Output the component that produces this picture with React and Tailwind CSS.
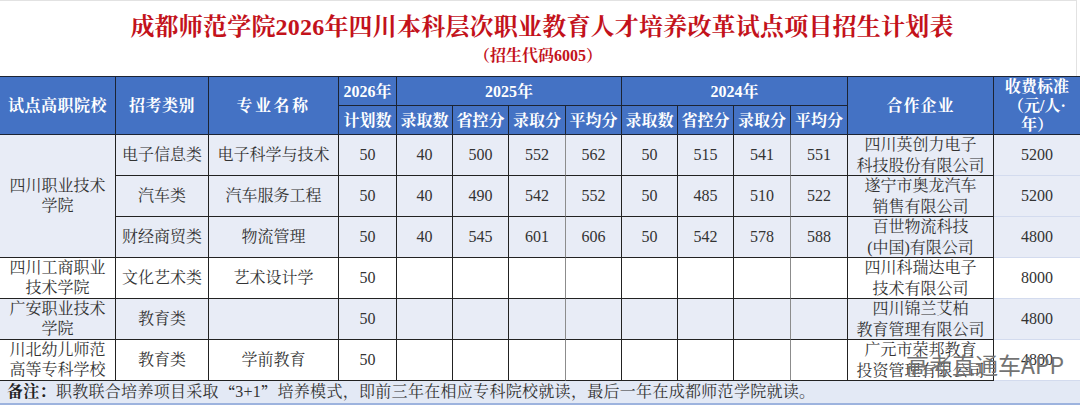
import React from "react";

const BLUE = "bg-[#e8ecf6]";

function H({ children, className = "" }) {
  return (
    <div
      className={`flex items-center justify-center text-center bg-[#4472c4] text-white font-bold text-[16px] leading-[19px] border-r border-b border-[#1c2433] ${className}`}
    >
      {children}
    </div>
  );
}

function C({ children, className = "", bg = "bg-white" }) {
  return (
    <div
      className={`flex items-center justify-center text-center text-[#333] text-[16px] leading-[20px] border-r border-b border-[#222] ${bg} ${className}`}
    >
      {children}
    </div>
  );
}

function F({ children, bg = "bg-white" }) {
  return (
    <div
      className={`flex items-center justify-center text-center text-[#333] text-[16px] leading-[20px] border-b border-[#d3dbee] ${bg}`}
    >
      {children}
    </div>
  );
}

function ScoreRow({ cat, major, vals, company, fee, bg }) {
  return (
    <>
      <C bg={bg}>{cat}</C>
      <C bg={bg}>{major}</C>
      {vals.map((v, i) => (
        <C
          key={i}
          bg={bg}
          className={i === 3 || i === 7 ? "border-r-[#8c8c8c]" : ""}
        >
          {v}
        </C>
      ))}
      <C bg={bg} className="leading-[21px] whitespace-nowrap">
        {company}
      </C>
      <F bg={bg}>{fee}</F>
    </>
  );
}

const E = ["", "", "", "", "", "", "", ""];

export default function App() {
  return (
    <div className="relative w-[1080px] h-[407px] overflow-hidden bg-white font-['Liberation_Serif','Noto_Serif_CJK_SC','Noto_Sans_CJK_SC',serif]">
      <div className="h-[76px] flex flex-col items-center border-t border-r border-[#e2e2e2] w-[1077px]">
        <div className="mt-[10px] text-[24px] leading-[32px] font-bold text-[#c3121b] pl-[8px] tracking-[0.2px]">
          成都师范学院2026年四川本科层次职业教育人才培养改革试点项目招生计划表
        </div>
        <div className="mt-[2px] text-[16px] leading-[22px] font-bold text-[#c3121b]">
          （招生代码6005）
        </div>
      </div>

      <div className="border-t border-[#1c2433] grid grid-cols-[116px_93px_130px_58px_56px_56px_57px_56px_56px_56px_57px_57px_146px_86px] grid-rows-[29px_29px_41px_41px_41px_41px_41px_41px]">
        <H className="row-span-2 tracking-[0.5px]">试点高职院校</H>
        <H className="row-span-2 tracking-[0.5px]">招考类别</H>
        <H className="row-span-2 tracking-[2.5px]">专业名称</H>
        <H>2026年</H>
        <H className="col-span-4">2025年</H>
        <H className="col-span-4">2024年</H>
        <H className="row-span-2 tracking-[1px]">合作企业</H>
        <div className="row-span-2 flex items-center justify-center text-center bg-[#4472c4] text-white font-bold text-[16px] leading-[19px] border-b border-[#1c2433]">
          收费标准
          <br />
          （元/人·
          <br />
          年）
        </div>
        <H>计划数</H>
        <H>录取数</H>
        <H>省控分</H>
        <H>录取分</H>
        <H>平均分</H>
        <H>录取数</H>
        <H>省控分</H>
        <H>录取分</H>
        <H>平均分</H>

        <C bg={BLUE} className="row-span-3">
          四川职业技术
          <br />
          学院
        </C>
        <ScoreRow
          bg={BLUE}
          cat="电子信息类"
          major="电子科学与技术"
          vals={["50", "40", "500", "552", "562", "50", "515", "541", "551"]}
          company={<span>四川英创力电子<br />科技股份有限公司</span>}
          fee="5200"
        />
        <ScoreRow
          bg={BLUE}
          cat="汽车类"
          major="汽车服务工程"
          vals={["50", "40", "490", "542", "552", "50", "485", "510", "522"]}
          company={<span>遂宁市奥龙汽车<br />销售有限公司</span>}
          fee="5200"
        />
        <ScoreRow
          bg={BLUE}
          cat="财经商贸类"
          major="物流管理"
          vals={["50", "40", "545", "601", "606", "50", "542", "578", "588"]}
          company={<span>百世物流科技<br />(中国)有限公司</span>}
          fee="4800"
        />

        <C>
          四川工商职业
          <br />
          技术学院
        </C>
        <ScoreRow
          cat="文化艺术类"
          major="艺术设计学"
          vals={["50", ...E]}
          company={<span>四川科瑞达电子<br />技术有限公司</span>}
          fee="8000"
        />

        <C bg={BLUE}>
          广安职业技术
          <br />
          学院
        </C>
        <ScoreRow
          bg={BLUE}
          cat="教育类"
          major=""
          vals={["50", ...E]}
          company={<span>四川锦兰艾柏<br />教育管理有限公司</span>}
          fee="4800"
        />

        <C>
          川北幼儿师范
          <br />
          高等专科学校
        </C>
        <ScoreRow
          cat="教育类"
          major="学前教育"
          vals={["50", ...E]}
          company={<span>广元市荣邦教育<br />投资管理有限公司</span>}
          fee="4800"
        />
      </div>

      <div className="h-[24px] flex items-center px-[7px] bg-[#e3e9f5] border-b-2 border-[#9db3de] text-[16px] tracking-[0.3px] text-[#333] whitespace-nowrap">
        <span className="font-bold text-[#222]">备注：</span>
        职教联合培养项目采取
        <span className="font-['Noto_Sans_CJK_SC',sans-serif]">“</span>
        3+1
        <span className="font-['Noto_Sans_CJK_SC',sans-serif]">”</span>
        培养模式，即前三年在相应专科院校就读，最后一年在成都师范学院就读。
      </div>

      <div className="absolute left-[906px] top-[350px] text-[23px] leading-[28px] font-['Noto_Sans_CJK_SC',sans-serif] font-normal text-[#737373] whitespace-nowrap">
        高考直通车APP
      </div>
    </div>
  );
}
